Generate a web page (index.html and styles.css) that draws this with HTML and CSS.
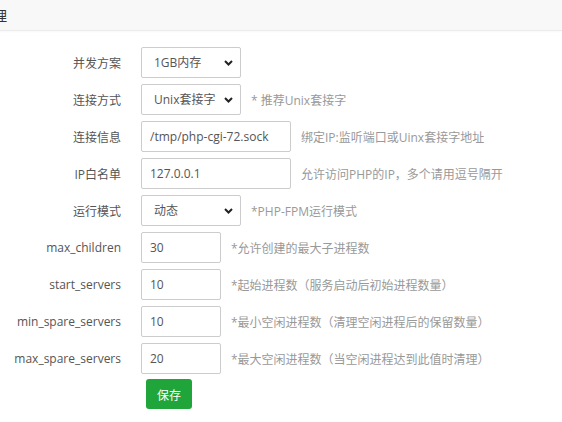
FILE: index.html
```html
<!DOCTYPE html>
<html lang="zh-CN">
<head>
<meta charset="utf-8">
<link rel="stylesheet" href="styles.css">
</head>
<body>
<div class="header"><span class="title">理</span></div>
<div class="form">
  <div class="row">
    <label class="lbl">并发方案</label>
    <div class="sel-wrap">
      <select class="sel"><option>1GB内存</option></select>
      <svg class="chev" width="9" height="6" viewBox="0 0 9 6"><path d="M1 1 L4.5 4.5 L8 1" fill="none" stroke="#222" stroke-width="2"/></svg>
    </div>
  </div>
  <div class="row">
    <label class="lbl">连接方式</label>
    <div class="sel-wrap">
      <select class="sel"><option>Unix套接字</option></select>
      <svg class="chev" width="9" height="6" viewBox="0 0 9 6"><path d="M1 1 L4.5 4.5 L8 1" fill="none" stroke="#222" stroke-width="2"/></svg>
    </div>
    <span class="hint">* 推荐Unix套接字</span>
  </div>
  <div class="row">
    <label class="lbl">连接信息</label>
    <input class="inp wide" value="/tmp/php-cgi-72.sock">
    <span class="hint">绑定IP:监听端口或Uinx套接字地址</span>
  </div>
  <div class="row">
    <label class="lbl">IP白名单</label>
    <input class="inp wide" value="127.0.0.1">
    <span class="hint">允许访问PHP的IP，多个请用逗号隔开</span>
  </div>
  <div class="row">
    <label class="lbl">运行模式</label>
    <div class="sel-wrap">
      <select class="sel"><option>动态</option></select>
      <svg class="chev" width="9" height="6" viewBox="0 0 9 6"><path d="M1 1 L4.5 4.5 L8 1" fill="none" stroke="#222" stroke-width="2"/></svg>
    </div>
    <span class="hint">*PHP-FPM运行模式</span>
  </div>
  <div class="row">
    <label class="lbl">max_children</label>
    <input class="inp narrow" value="30">
    <span class="hint">*允许创建的最大子进程数</span>
  </div>
  <div class="row">
    <label class="lbl">start_servers</label>
    <input class="inp narrow" value="10">
    <span class="hint">*起始进程数（服务启动后初始进程数量）</span>
  </div>
  <div class="row">
    <label class="lbl">min_spare_servers</label>
    <input class="inp narrow" value="10">
    <span class="hint">*最小空闲进程数（清理空闲进程后的保留数量）</span>
  </div>
  <div class="row">
    <label class="lbl">max_spare_servers</label>
    <input class="inp narrow" value="20">
    <span class="hint">*最大空闲进程数（当空闲进程达到此值时清理）</span>
  </div>
  <div class="actions">
    <button class="btn">保存</button>
  </div>
</div>
</body>
</html>
```
FILE: styles.css
```css
* { box-sizing: border-box; }
html, body { margin: 0; padding: 0; background: #fff; }
body {
  font-family: "Open Sans", "Noto Sans CJK SC", sans-serif;
  font-size: 12px;
  color: #555;
  overflow: hidden;
}
.header {
  height: 31px;
  background: #f8f8f8;
  border-bottom: 1px solid #ececec;
  box-shadow: 0 1px 2px rgba(0,0,0,0.03);
  display: flex;
  align-items: center;
}
.title {
  font-family: "Noto Sans CJK SC", sans-serif;
  font-size: 14px;
  color: #333;
  margin-left: -7px;
}
.form {
  padding-top: 16px;
}
.row {
  display: flex;
  align-items: center;
  height: 31px;
  margin-bottom: 6px;
}
.lbl {
  width: 121px;
  margin-right: 20px;
  text-align: right;
  color: #555;
  flex: none;
}
.sel-wrap {
  position: relative;
  width: 100px;
  height: 31px;
  flex: none;
}
.sel {
  appearance: none;
  -webkit-appearance: none;
  width: 100%;
  height: 100%;
  border: 1px solid #ccc;
  border-radius: 2px;
  background: #fff;
  padding: 0 0 0 12px;
  font: inherit;
  color: #555;
  outline: none;
}
.chev {
  position: absolute;
  right: 8px;
  top: 13px;
  pointer-events: none;
}
.inp {
  height: 31px;
  border: 1px solid #ccc;
  border-radius: 2px;
  padding: 0 8px;
  font: inherit;
  color: #555;
  outline: none;
  flex: none;
}
.wide { width: 150px; }
.narrow { width: 80px; }
.hint {
  margin-left: 10px;
  color: #999;
  white-space: nowrap;
}
.actions {
  margin-top: -1px;
  padding-left: 146px;
}
.btn {
  width: 46px;
  height: 30px;
  border: none;
  border-radius: 3px;
  background: #20a53a;
  color: #fff;
  font-family: "Noto Sans CJK SC", sans-serif;
  font-size: 12px;
  padding: 0;
}
```
